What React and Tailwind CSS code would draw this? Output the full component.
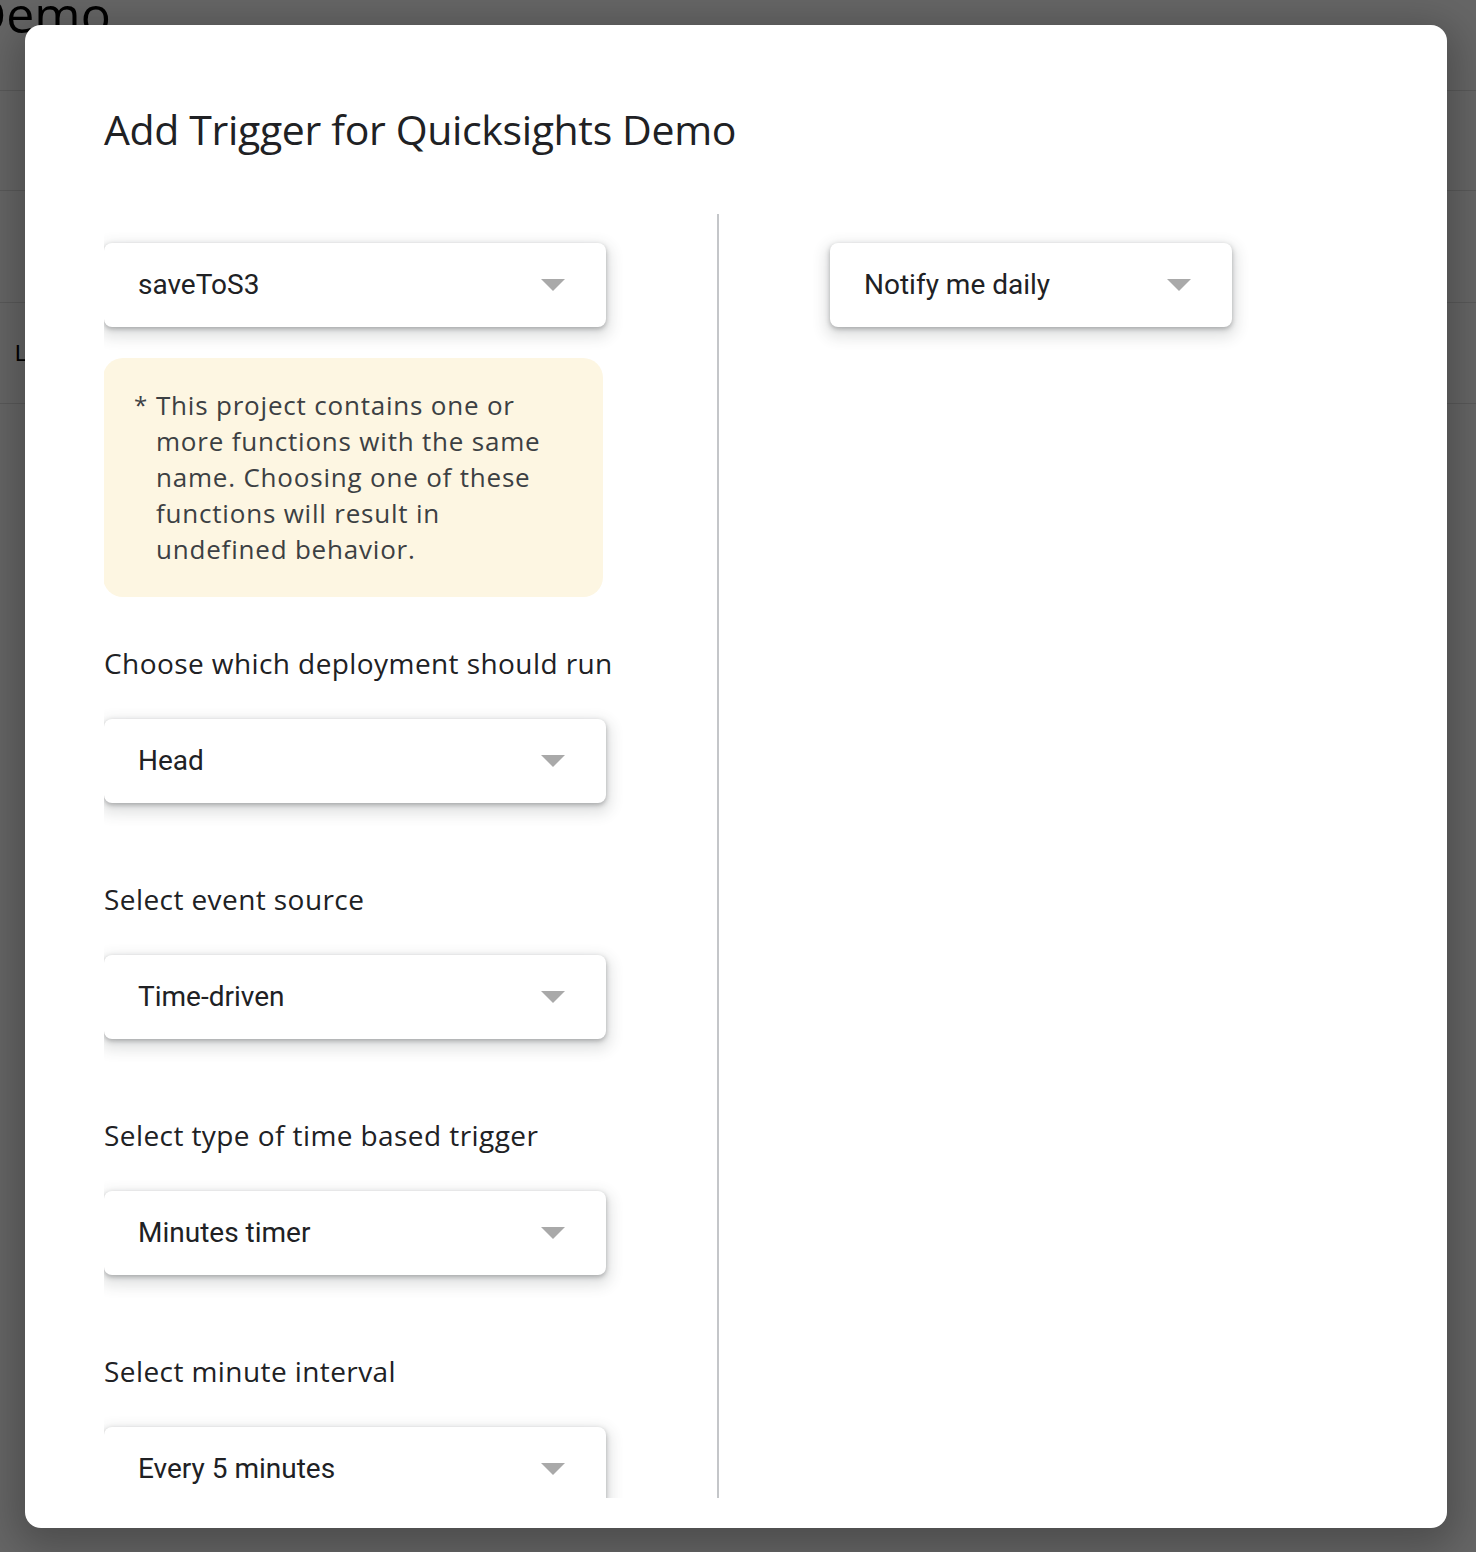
import React from 'react';

const Caret = () => (
    <svg width="24" height="12" viewBox="0 0 24 12" className="shrink-0">
        <path d="M0 0 L24 0 L12 12 Z" fill="#a9a9a9" />
    </svg>
);

const Dropdown = ({ value, width = 'w-[502px]' }) => (
    <div
        className={`${width} h-[84px] shrink-0 bg-white rounded-[8px] flex items-center justify-between pl-[34px] pr-[41px] shadow-[0_2px_5px_rgba(60,64,67,0.38),0_6px_14px_5px_rgba(60,64,67,0.14)]`}
    >
        <span className="text-[28px] text-[#202124] font-['Roboto',sans-serif]">{value}</span>
        <Caret />
    </div>
);

const Label = ({ children }) => (
    <div className="whitespace-nowrap text-[28px] leading-[36px] text-[#202124] font-['Open_Sans',sans-serif] tracking-[0.42px]">
        {children}
    </div>
);

export default function App() {
    return (
        <div className="relative w-full h-[1552px] overflow-hidden bg-white">
            {/* page behind the dialog */}
            <div className="flex flex-col">
                <div className="h-[91px] border-b border-[#e0e0e0] flex items-start">
                    <span className="ml-[-30px] mt-[-18px] text-[50px] leading-[64px] text-black font-['Open_Sans',sans-serif]">
                        Demo
                    </span>
                </div>
                <div className="h-[100px] border-b border-[#e0e0e0]" />
                <div className="h-[112px] border-b border-[#e0e0e0]" />
                <div className="h-[101px] border-b border-[#e0e0e0] flex items-center pl-[15px]">
                    <span className="text-[22px] text-black font-['Roboto',sans-serif]">Last</span>
                </div>
            </div>

            {/* scrim */}
            <div className="absolute inset-0 bg-black/60" />

            {/* dialog */}
            <div className="absolute left-[25px] top-[25px] w-[1422px] h-[1503px] bg-white rounded-[16px] shadow-[0_10px_40px_10px_rgba(0,0,0,0.25)] flex flex-col pl-[79px] pr-[79px] pt-[76px] pb-[30px]">
                <h1 className="text-[41px] leading-[56px] text-[#202124] font-['Open_Sans',sans-serif] tracking-[-0.35px]">
                    Add Trigger for Quicksights Demo
                </h1>

                <div className="mt-[57px] flex-1 flex overflow-hidden">
                    {/* left column */}
                    <div className="w-[502px] shrink-0 flex flex-col pt-[29px]">
                        <Dropdown value="saveToS3" />

                        <div className="mt-[31px] w-[500px] -ml-px bg-[#fdf6e2] rounded-[20px] pl-[31px] pr-[20px] pt-[29px] pb-[30px] flex text-[26px] leading-[36px] text-[#3c4043] font-['Open_Sans',sans-serif] font-medium tracking-[0.8px]">
                            <span className="w-[22px] shrink-0 text-[24px] tracking-normal">*</span>
                            <span className="whitespace-nowrap">
                                This project contains one or
                                <br />
                                more functions with the same
                                <br />
                                name. Choosing one of these
                                <br />
                                functions will result in
                                <br />
                                undefined behavior.
                            </span>
                        </div>

                        <div className="mt-[48px]">
                            <Label>Choose which deployment should run</Label>
                        </div>
                        <div className="mt-[38px]">
                            <Dropdown value="Head" />
                        </div>

                        <div className="mt-[78px]">
                            <Label>Select event source</Label>
                        </div>
                        <div className="mt-[38px]">
                            <Dropdown value="Time-driven" />
                        </div>

                        <div className="mt-[78px]">
                            <Label>Select type of time based trigger</Label>
                        </div>
                        <div className="mt-[38px]">
                            <Dropdown value="Minutes timer" />
                        </div>

                        <div className="mt-[78px]">
                            <Label>Select minute interval</Label>
                        </div>
                        <div className="mt-[38px]">
                            <Dropdown value="Every 5 minutes" />
                        </div>
                    </div>

                    {/* divider */}
                    <div className="w-[2px] ml-[111px] mr-[111px] bg-[#c4c6c9] shrink-0" />

                    {/* right column */}
                    <div className="flex flex-col pt-[29px]">
                        <Dropdown value="Notify me daily" width="w-[402px]" />
                    </div>
                </div>
            </div>
        </div>
    );
}
